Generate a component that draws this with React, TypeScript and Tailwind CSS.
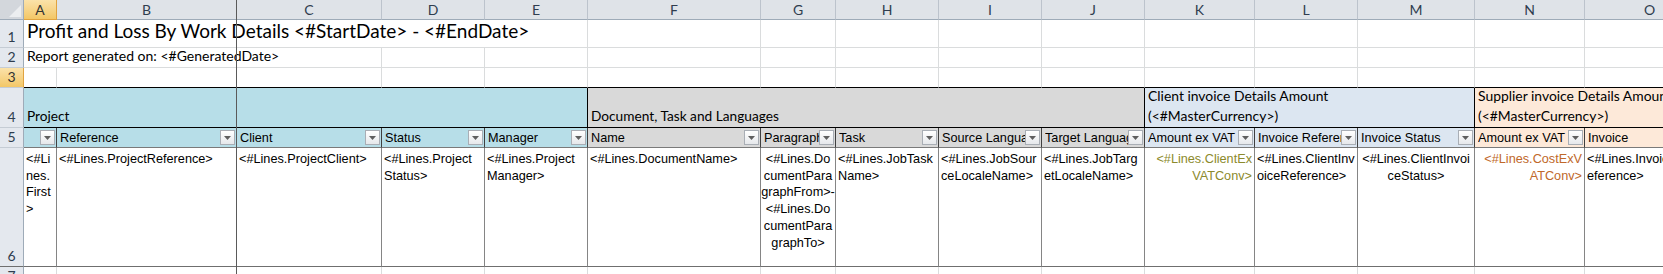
import React from "react";

const LETTERS = ["A", "B", "C", "D", "E", "F", "G", "H", "I", "J", "K", "L", "M", "N", "O"];

const GROUP_BG = [
  "bg-[#b7dee8]", "bg-[#b7dee8]", "bg-[#b7dee8]", "bg-[#b7dee8]", "bg-[#b7dee8]",
  "bg-[#d9d9d9]", "bg-[#d9d9d9]", "bg-[#d9d9d9]", "bg-[#d9d9d9]", "bg-[#d9d9d9]",
  "bg-[#dce6f1]", "bg-[#dce6f1]", "bg-[#dce6f1]",
  "bg-[#fde9d9]", "bg-[#fde9d9]",
];

const HEADERS = [
  "", "Reference", "Client", "Status", "Manager", "Name", "Paragraph", "Task",
  "Source Language", "Target Language", "Amount ex VAT", "Invoice Reference",
  "Invoice Status", "Amount ex VAT", "Invoice",
];

type DataCell = { lines: string[]; align: string; color: string };

const DATA: DataCell[] = [
  { lines: ["<#Li", "nes.", "First", ">"], align: "items-start", color: "text-black" },
  { lines: ["<#Lines.ProjectReference>"], align: "items-start", color: "text-black" },
  { lines: ["<#Lines.ProjectClient>"], align: "items-start", color: "text-black" },
  { lines: ["<#Lines.Project", "Status>"], align: "items-start", color: "text-black" },
  { lines: ["<#Lines.Project", "Manager>"], align: "items-start", color: "text-black" },
  { lines: ["<#Lines.DocumentName>"], align: "items-start", color: "text-black" },
  {
    lines: ["<#Lines.Do", "cumentPara", "graphFrom>-", "<#Lines.Do", "cumentPara", "graphTo>"],
    align: "items-center",
    color: "text-black",
  },
  { lines: ["<#Lines.JobTask", "Name>"], align: "items-start", color: "text-black" },
  { lines: ["<#Lines.JobSour", "ceLocaleName>"], align: "items-start", color: "text-black" },
  { lines: ["<#Lines.JobTarg", "etLocaleName>"], align: "items-start", color: "text-black" },
  { lines: ["<#Lines.ClientEx", "VATConv>"], align: "items-end", color: "text-[#8c8a2c]" },
  { lines: ["<#Lines.ClientInv", "oiceReference>"], align: "items-start", color: "text-black" },
  { lines: ["<#Lines.ClientInvoi", "ceStatus>"], align: "items-center", color: "text-black" },
  { lines: ["<#Lines.CostExV", "ATConv>"], align: "items-end", color: "text-[#c0682a]" },
  { lines: ["<#Lines.InvoiceR", "eference>"], align: "items-start", color: "text-black" },
];

const CAL = "font-['Lato','Liberation_Sans',sans-serif]";
const ARIAL = "font-['Liberation_Sans','Arial',sans-serif]";

function RowHead({ n, sel, last }: { n: string; sel?: boolean; last?: boolean }) {
  return (
    <div
      className={`flex items-end justify-center pb-[2px] border-r border-b text-[14px] leading-[16px] ${CAL} ${
        sel
          ? "bg-gradient-to-b from-[#fbe2a9] to-[#f3c766] border-r-[#e0a340] text-[#333]"
          : "bg-[#e4e8ee] border-r-[#9eabb8] text-[#2f3d4f]"
      } ${last ? "border-b-[#6f6f6f]" : "border-b-[#c5ccd4]"}`}
    >
      {n}
    </div>
  );
}

function FilterButton() {
  return (
    <div className="w-[15px] h-[15px] mr-[1px] shrink-0 flex items-center justify-center border border-[#a9aeb5] bg-gradient-to-b from-[#ffffff] to-[#e6e8eb]">
      <svg width="7" height="4" viewBox="0 0 7 4">
        <path d="M0 0H7L3.5 4Z" fill="#5f5f5f" />
      </svg>
    </div>
  );
}

export default function App() {
  return (
    <div className="w-[1663px] h-[274px] overflow-hidden bg-white">
      <div className="relative w-[1715px] grid grid-cols-[24px_33px_180px_145px_103px_103px_173px_75px_103px_103px_103px_110px_103px_117px_110px_130px] grid-rows-[20px_28px_20px_20px_40px_20px_119px_20px]">
        {/* column header row */}
        <div className="bg-[#d3d7dc] border-r border-b border-r-[#9eabb8] border-b-[#9eabb8] flex items-end justify-end p-[2px]">
          <svg width="12" height="12" viewBox="0 0 12 12">
            <path d="M12 0V12H0Z" fill="#eceef0" />
          </svg>
        </div>
        {LETTERS.map((l, i) => (
          <div
            key={l}
            className={`flex items-center justify-center border-r border-b text-[14px] ${CAL} ${
              i === 0
                ? "bg-gradient-to-b from-[#fbe2a9] to-[#f3c766] border-r-[#e0a340] border-b-[#e0a340] text-[#333]"
                : "bg-[#dfe3e8] border-r-[#bcc3cc] border-b-[#9eabb8] text-[#2f3d4f]"
            }`}
          >
            {l}
          </div>
        ))}

        {/* row 1 */}
        <RowHead n="1" />
        <div className={`col-span-5 flex items-end px-[3px] pb-[4px] border-r border-b border-[#dadcdd] whitespace-nowrap text-[19px] leading-[24px] text-black ${CAL}`}>
          Profit and Loss By Work Details &lt;#StartDate&gt; - &lt;#EndDate&gt;
        </div>
        {LETTERS.slice(5).map((l) => (
          <div key={"r1" + l} className="border-r border-b border-[#dadcdd]" />
        ))}

        {/* row 2 */}
        <RowHead n="2" />
        <div className={`col-span-3 flex items-end px-[3px] pb-[2px] border-r border-b border-[#dadcdd] whitespace-nowrap text-[14px] leading-[18px] text-black ${CAL}`}>
          Report generated on: &lt;#GeneratedDate&gt;
        </div>
        {LETTERS.slice(3).map((l) => (
          <div key={"r2" + l} className="border-r border-b border-[#dadcdd]" />
        ))}

        {/* row 3 */}
        <RowHead n="3" sel />
        {LETTERS.map((l) => (
          <div key={"r3" + l} className="border-r border-b border-r-[#dadcdd] border-b-black" />
        ))}

        {/* row 4 */}
        <RowHead n="4" />
        <div className={`col-span-5 bg-[#b7dee8] border-r border-b border-black flex flex-col justify-end px-[3px] pb-[1px] text-[13.7px] leading-[20px] text-black ${CAL}`}>
          <div>Project</div>
        </div>
        <div className={`col-span-5 bg-[#d9d9d9] border-r border-b border-black flex flex-col justify-end px-[3px] pb-[1px] text-[13.7px] leading-[20px] text-black ${CAL}`}>
          <div>Document, Task and Languages</div>
        </div>
        <div className={`col-span-3 bg-[#dce6f1] border-r border-b border-black flex flex-col justify-end px-[3px] pb-[1px] text-[13.9px] leading-[20px] text-black whitespace-nowrap ${CAL}`}>
          <div>Client invoice Details Amount</div>
          <div>(&lt;#MasterCurrency&gt;)</div>
        </div>
        <div className={`col-span-2 bg-[#fde9d9] border-b border-black flex flex-col justify-end px-[3px] pb-[1px] text-[13.9px] leading-[20px] text-black whitespace-nowrap overflow-hidden ${CAL}`}>
          <div>Supplier invoice Details Amount</div>
          <div>(&lt;#MasterCurrency&gt;)</div>
        </div>

        {/* row 5 */}
        <RowHead n="5" />
        {HEADERS.map((h, i) => (
          <div
            key={"r5" + i}
            className={`${GROUP_BG[i]} flex items-center border-r border-b border-r-[#3f3f3f] border-b-[#7a7a7a] pl-[3px] ${ARIAL} text-[12.7px] leading-[18px] text-black`}
          >
            <div className="flex-1 min-w-0 overflow-hidden whitespace-nowrap">{h}</div>
            {i < 14 && <FilterButton />}
          </div>
        ))}

        {/* row 6 */}
        <RowHead n="6" last />
        {DATA.map((d, i) => (
          <div
            key={"r6" + i}
            className={`flex flex-col ${d.align} border-r border-b border-r-[#858585] border-b-[#6f6f6f] px-[2px] pt-[3px] overflow-hidden ${ARIAL} text-[12.7px] leading-[16.7px] ${d.color}`}
          >
            {d.lines.map((ln, j) => (
              <div key={j} className="whitespace-nowrap">
                {ln}
              </div>
            ))}
          </div>
        ))}

        {/* row 7 */}
        <RowHead n="7" />
        {LETTERS.map((l) => (
          <div key={"r7" + l} className="border-r border-b border-[#dadcdd]" />
        ))}

        {/* frozen pane divider */}
        <div className="absolute left-[236px] top-0 bottom-0 w-px bg-[#5a5a5a]" />
      </div>
    </div>
  );
}
